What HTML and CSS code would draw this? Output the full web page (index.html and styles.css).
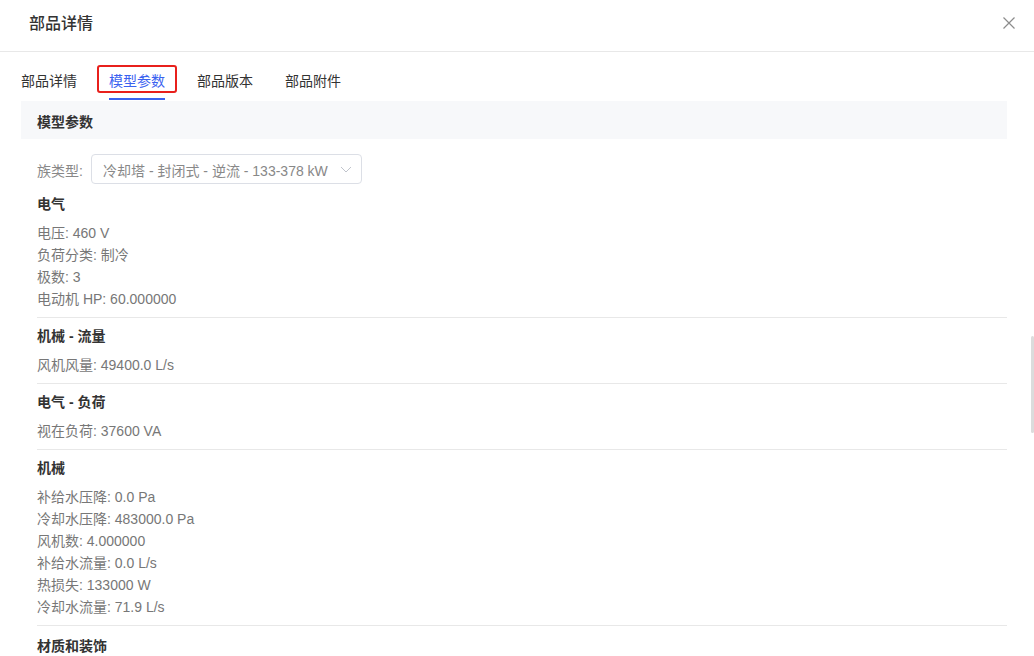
FILE: index.html
```html
<!DOCTYPE html>
<html lang="zh-CN">
<head>
    <meta charset="utf-8">
    <title>部品详情</title>
    <link rel="stylesheet" href="styles.css">
</head>
<body>
    <div class="drawer">
        <div class="drawer-header">
            <h2 class="drawer-title">部品详情</h2>
            <span class="drawer-close">
                <svg width="14" height="14" viewBox="0 0 14 14"><path d="M1.5 1.5L12.5 12.5M12.5 1.5L1.5 12.5" stroke="#8c8c8c" stroke-width="1.2" fill="none"/></svg>
            </span>
        </div>

        <!-- onglets -->
        <div class="tabs">
            <div class="tab">部品详情</div>
            <div class="tab active">模型参数</div>
            <div class="tab">部品版本</div>
            <div class="tab">部品附件</div>
        </div>

        <div class="panel">
            <div class="panel-title">模型参数</div>
            <div class="panel-body">
                <div class="field">
                    <span class="field-label">族类型:</span>
                    <div class="select">
                        <span class="select-value">冷却塔 - 封闭式 - 逆流 - 133-378 kW</span>
                        <svg class="select-arrow" width="12" height="7" viewBox="0 0 12 7"><path d="M1 1L6 6L11 1" stroke="#c0c4cc" stroke-width="1" fill="none"/></svg>
                    </div>
                </div>

                <div class="group">
                    <div class="group-title">电气</div>
                    <div class="param">电压: 460 V</div>
                    <div class="param">负荷分类: 制冷</div>
                    <div class="param">极数: 3</div>
                    <div class="param">电动机 HP: 60.000000</div>
                </div>

                <div class="group">
                    <div class="group-title">机械 - 流量</div>
                    <div class="param">风机风量: 49400.0 L/s</div>
                </div>

                <div class="group">
                    <div class="group-title">电气 - 负荷</div>
                    <div class="param">视在负荷: 37600 VA</div>
                </div>

                <div class="group">
                    <div class="group-title">机械</div>
                    <div class="param">补给水压降: 0.0 Pa</div>
                    <div class="param">冷却水压降: 483000.0 Pa</div>
                    <div class="param">风机数: 4.000000</div>
                    <div class="param">补给水流量: 0.0 L/s</div>
                    <div class="param">热损失: 133000 W</div>
                    <div class="param">冷却水流量: 71.9 L/s</div>
                </div>

                <div class="group">
                    <div class="group-title">材质和装饰</div>
                </div>
            </div>
        </div>

        <div class="scroll-thumb"></div>
    </div>
</body>
</html>
```

FILE: styles.css
```css
html, body {
    margin: 0;
    padding: 0;
    background: #fff;
}

body {
    font-family: "Liberation Sans", "Noto Sans CJK SC", sans-serif;
    font-size: 14px;
    color: #333;
    overflow: hidden;
}

.drawer {
    position: relative;
    width: 1034px;
    height: 656px;
    overflow: hidden;
}

.drawer-header {
    height: 52px;
    box-sizing: border-box;
    display: flex;
    justify-content: space-between;
    align-items: flex-start;
    padding: 13px 18px 0 29px;
    border-bottom: 1px solid #e8e8e8;
}

    .drawer-title {
        margin: 0;
        font-size: 16px;
        font-weight: 500;
        line-height: 22px;
        color: #333;
    }

    .drawer-close {
        display: flex;
        margin-top: 3px;
        cursor: pointer;
    }

.tabs {
    display: flex;
    gap: 32px;
    padding-left: 21px;
}

    .tab {
        position: relative;
        padding: 18px 0 6px;
        line-height: 22px;
        color: #333;
        border-bottom: 2px solid transparent;
        cursor: pointer;
    }

    .tab.active {
        color: #3a62f0;
        border-bottom-color: #3a62f0;
    }

        /* cadre rouge d'annotation */
        .tab.active::after {
            content: "";
            position: absolute;
            left: -12px;
            top: 13px;
            width: 80px;
            height: 28px;
            box-sizing: border-box;
            border: 2px solid #e8201c;
            border-radius: 3px;
        }

.panel {
    margin: 1px 27px 0 21px;
}

    .panel-title {
        height: 38px;
        box-sizing: border-box;
        line-height: 34px;
        padding: 4px 0 0 16px;
        background: #f7f8fa;
        font-weight: bold;
        color: #333;
    }

    .panel-body {
        padding-left: 16px;
    }

.field {
    display: flex;
    align-items: center;
    margin-top: 15px;
}

    .field-label {
        width: 54px;
        color: #888;
        padding-top: 1px;
    }

    .select {
        width: 271px;
        height: 30px;
        box-sizing: border-box;
        border: 1px solid #dcdfe6;
        border-radius: 4px;
        display: flex;
        align-items: center;
        justify-content: space-between;
        padding: 1px 9px 0 11px;
    }

        .select-value {
            color: #888;
        }

.group {
    padding: 5px 0 9px;
    border-top: 1px solid #e8e8e8;
}

.field + .group {
    border-top: none;
    padding-top: 7px;
}

.group:last-child {
    padding-top: 7px;
}

    .group-title {
        line-height: 18px;
        padding-top: 4px;
        font-weight: bold;
        color: #333;
        margin-bottom: 7px;
    }

    .param {
        line-height: 18px;
        padding-top: 4px;
        color: #777;
    }

.scroll-thumb {
    position: absolute;
    right: 0;
    top: 336px;
    width: 3px;
    height: 97px;
    background: #dcdcdc;
    border-radius: 2px;
}
```
